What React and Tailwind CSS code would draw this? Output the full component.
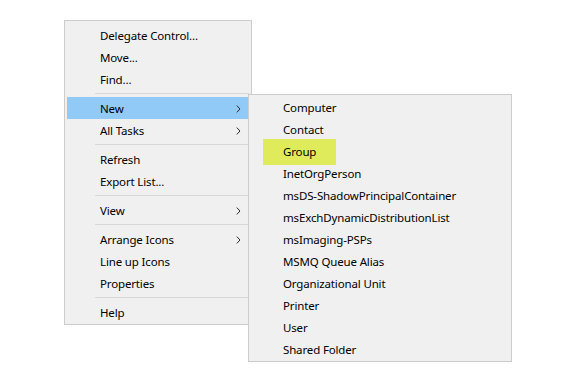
import React from "react";

const mainItems = [
  { label: "Delegate Control..." },
  { label: "Move..." },
  { label: "Find..." },
  { sep: true },
  { label: "New", sub: true, active: true },
  { label: "All Tasks", sub: true },
  { sep: true },
  { label: "Refresh" },
  { label: "Export List..." },
  { sep: true },
  { label: "View", sub: true },
  { sep: true },
  { label: "Arrange Icons", sub: true },
  { label: "Line up Icons" },
  { label: "Properties" },
  { sep: true },
  { label: "Help" },
];

const newItems = [
  "Computer",
  "Contact",
  "Group",
  "InetOrgPerson",
  "msDS-ShadowPrincipalContainer",
  "msExchDynamicDistributionList",
  "msImaging-PSPs",
  "MSMQ Queue Alias",
  "Organizational Unit",
  "Printer",
  "User",
  "Shared Folder",
];

function Chevron() {
  return (
    <svg width="5" height="8" viewBox="0 0 5 8" className="shrink-0">
      <polyline points="0.8,0.6 4,4 0.8,7.4" fill="none" stroke="#2b2b2b" strokeWidth="1" />
    </svg>
  );
}

function SubMenu() {
  return (
    <div className="absolute left-[183px] top-[73px] w-[264px] border border-[#cccccc] bg-[#f0f0f0] py-px px-[2px]">
      {newItems.map((name) => (
        <div key={name} className="relative flex h-[22px] items-center pl-[32px] pt-px">
          {name === "Group" && (
            <span className="absolute left-[12px] top-[-1px] h-[26px] w-[73px] bg-[#e0eb5b]" />
          )}
          <span className="relative">{name}</span>
        </div>
      ))}
    </div>
  );
}

export default function App() {
  return (
    <div
      className="h-[389px] w-[565px] bg-white pl-[64px] pt-[20px] text-[11.5px] tracking-[-0.15px] text-black"
      style={{ fontFamily: '"Noto Sans", "Open Sans", sans-serif' }}
    >
      <div className="relative w-[188px] border border-[#cccccc] bg-[#f0f0f0] px-[2px] pt-[3px] pb-[1px]">
        {mainItems.map((item, i) =>
          item.sep ? (
            <div key={i} className="py-[3px] pl-[28px]">
              <div className="h-px bg-[#d7d7d7]" />
            </div>
          ) : (
            <div
              key={i}
              className={
                "flex h-[22px] items-center justify-between pl-[33px] pr-[8px] pt-px " +
                (item.active ? "bg-[#91c9f7]" : "")
              }
            >
              <span>{item.label}</span>
              {item.sub && <Chevron />}
            </div>
          )
        )}
        <SubMenu />
      </div>
    </div>
  );
}
